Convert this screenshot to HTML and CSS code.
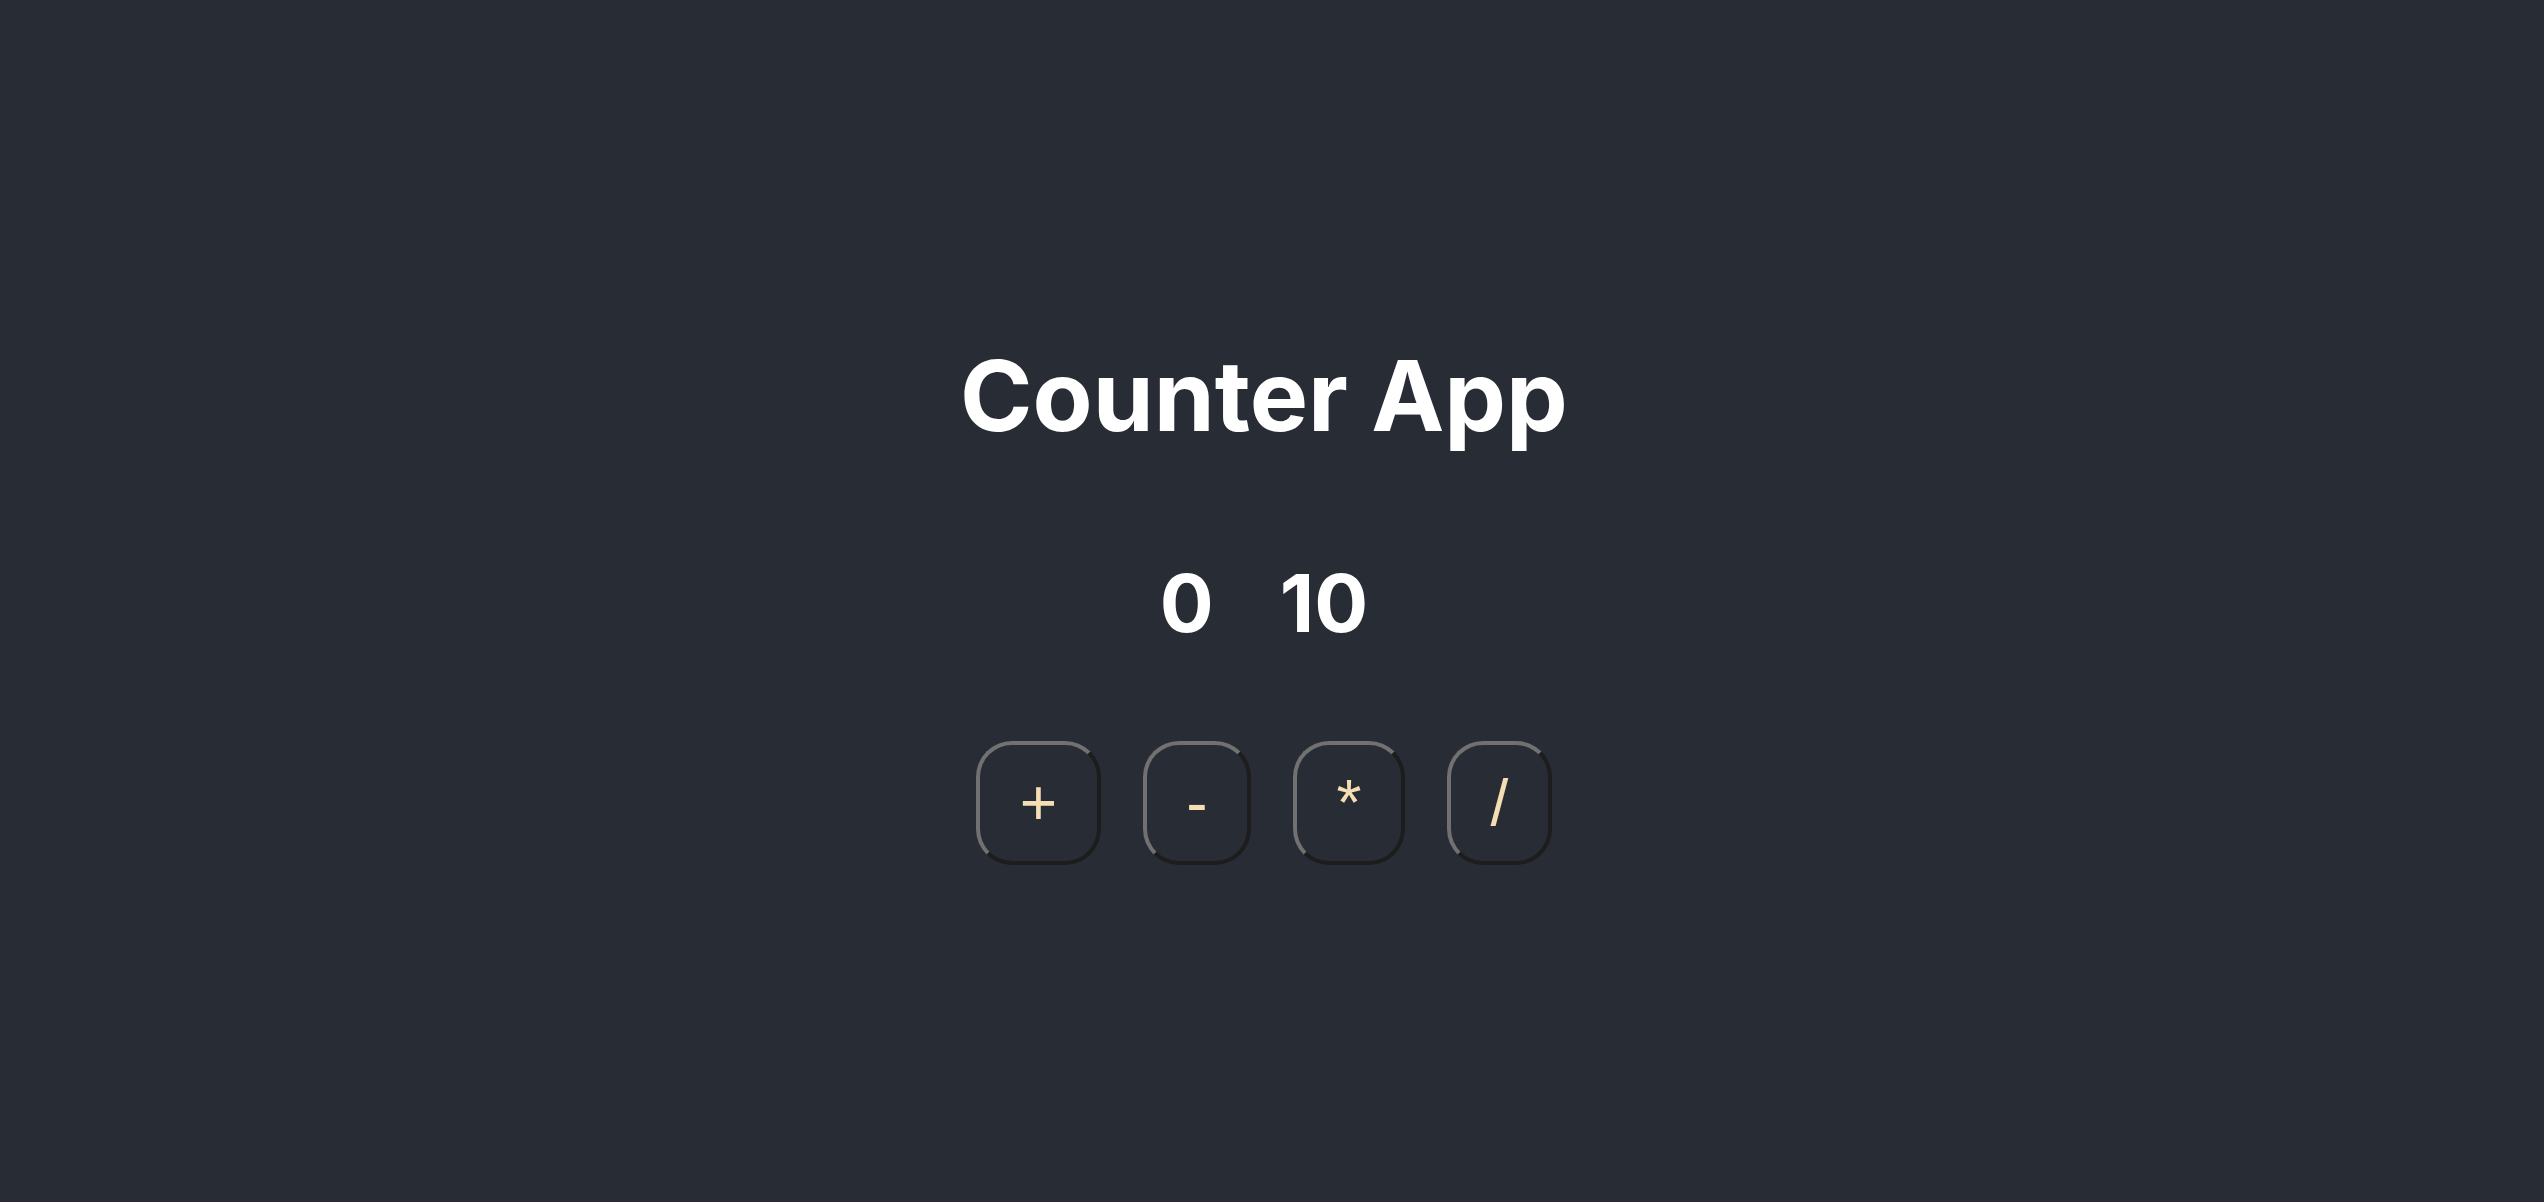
FILE: index.html
```html
<!DOCTYPE html>
<html lang="en">
<head>
<meta charset="utf-8">
<title>Counter App</title>
<link rel="stylesheet" href="styles.css">
</head>
<body>
  <div class="app">
    <h1 class="title">Counter App</h1>
    <div class="values">
      <span class="value">0</span>
      <span class="value">10</span>
    </div>
    <div class="controls">
      <button class="btn">+</button>
      <button class="btn">-</button>
      <button class="btn">*</button>
      <button class="btn">/</button>
    </div>
  </div>
</body>
</html>
```

FILE: styles.css
```css
html, body {
  margin: 0;
  padding: 0;
  background: #282c34;
}

.app {
  min-height: 100vh;
  box-sizing: border-box;
  padding-right: 16px;
  display: flex;
  flex-direction: column;
  align-items: center;
  justify-content: center;
  font-family: Inter, "Liberation Sans", sans-serif;
  color: #ffffff;
}

.title {
  margin: 0;
  font-size: 98px;
  font-weight: 700;
  line-height: 1.2;
}

.values {
  margin-top: 100px;
  display: flex;
  gap: 66px;
  font-size: 80px;
  font-weight: 700;
  line-height: 1.2;
}

.controls {
  margin-top: 90px;
  display: flex;
  gap: 42px;
}

.btn {
  font-family: "Liberation Sans", Arial, sans-serif;
  font-size: 64px;
  font-weight: 400;
  line-height: normal;
  color: #f5deb3;
  background: transparent;
  padding: 21px 39.5px;
  border-width: 4px;
  border-style: solid;
  border-color: #717171 #1d1d1d #1d1d1d #717171;
  border-radius: 36px;
  cursor: pointer;
}
```
